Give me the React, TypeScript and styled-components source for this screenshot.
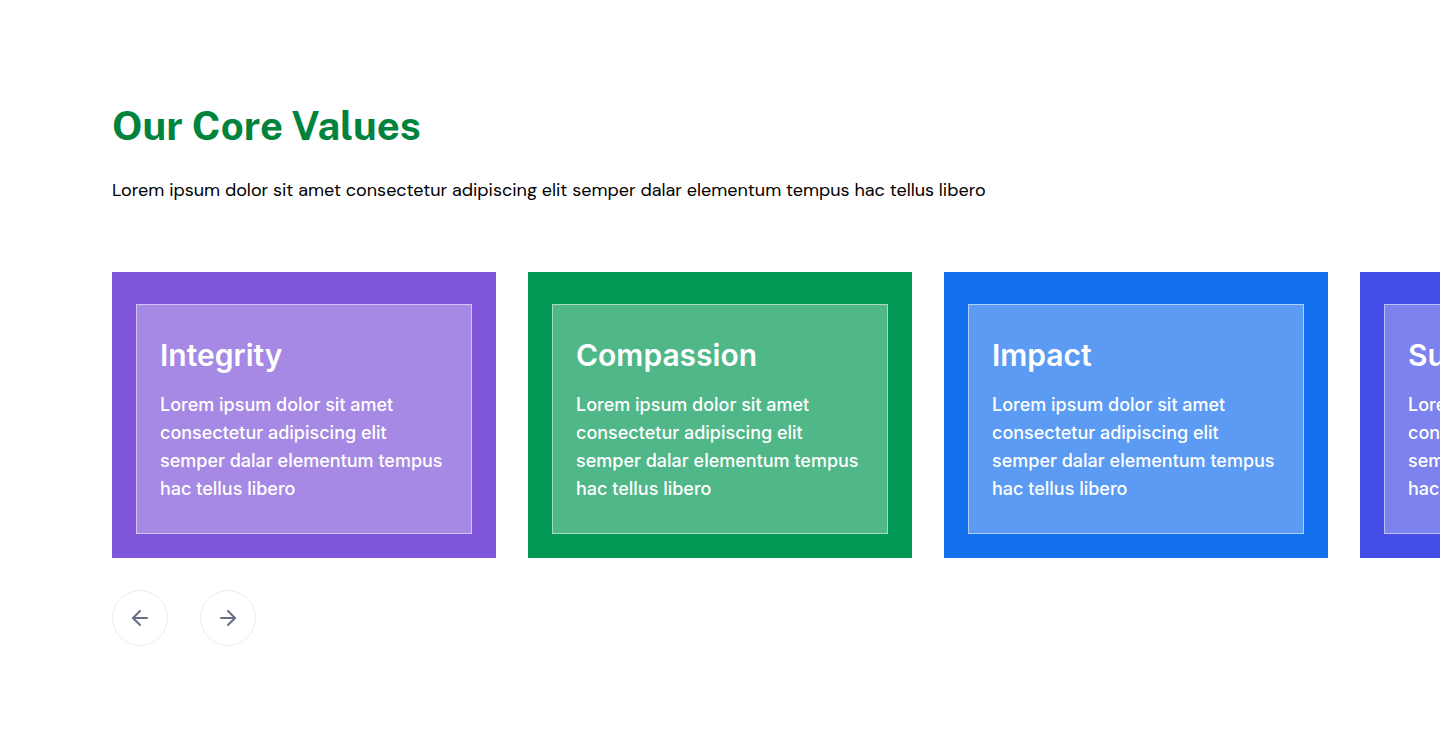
import { useRef } from "react";
import styled, { createGlobalStyle } from "styled-components";
import { ArrowLeft, ArrowRight } from "lucide-react";

const GlobalStyle = createGlobalStyle`
  *, *::before, *::after { box-sizing: border-box; }
  body {
    margin: 0;
    background: #ffffff;
    font-family: Inter, "Liberation Sans", sans-serif;
    -webkit-font-smoothing: antialiased;
  }
  h2, h3, p, ul { margin: 0; padding: 0; }
`;

const Section = styled.section`
  display: flex;
  flex-direction: column;
  gap: 32px;
  padding: 96px 0 96px 112px;
`;

const Header = styled.header`
  display: flex;
  flex-direction: column;
  gap: 20px;
  padding: 0 112px 36px 0;
`;

const Heading = styled.h2`
  font-family: "Public Sans", Inter, sans-serif;
  font-size: 40px;
  line-height: 60px;
  font-weight: 700;
  color: #00843d;
`;

const Intro = styled.p`
  font-family: "DM Sans", Inter, sans-serif;
  font-size: 18px;
  line-height: 28px;
  color: #000000;
`;

const Track = styled.ul`
  display: flex;
  gap: 32px;
  overflow-x: auto;
  list-style: none;
  scrollbar-width: none;
`;

const Card = styled.li<{ $color: string }>`
  flex: 0 0 384px;
  padding: 32px 24px 24px;
  background: ${({ $color }) => $color};
`;

const Panel = styled.article`
  display: flex;
  flex-direction: column;
  gap: 17px;
  padding: 31px 23px 30px;
  border: 1px solid rgba(255, 255, 255, 0.5);
  background: rgba(255, 255, 255, 0.3);
  color: #ffffff;
`;

const CardTitle = styled.h3`
  font-size: 30px;
  line-height: 38px;
  font-weight: 600;
`;

const CardText = styled.p`
  font-size: 18px;
  line-height: 28px;
  font-weight: 500;
`;

const Controls = styled.div`
  display: flex;
  gap: 32px;
`;

const RoundButton = styled.button`
  display: flex;
  align-items: center;
  justify-content: center;
  width: 56px;
  height: 56px;
  padding: 0;
  border: 1px solid #eaecf0;
  border-radius: 50%;
  background: #ffffff;
  color: #667085;
  cursor: pointer;
`;

const copy = "Lorem ipsum dolor sit amet consectetur adipiscing elit semper dalar elementum tempus hac tellus libero";

const values = [
  { title: "Integrity", color: "#7f56d9" },
  { title: "Compassion", color: "#039855" },
  { title: "Impact", color: "#1570ef" },
  { title: "Sustainability", color: "#444ce7" },
];

export default function App() {
  const track = useRef<HTMLUListElement>(null);
  const move = (direction: number) =>
    track.current?.scrollBy({ left: direction * 416, behavior: "smooth" });

  return (
    <>
      <GlobalStyle />
      <Section aria-labelledby="values-heading">
        <Header>
          <Heading id="values-heading">Our Core Values</Heading>
          <Intro>{copy}</Intro>
        </Header>
        <Track ref={track}>
          {values.map(({ title, color }) => (
            <Card key={title} $color={color}>
              <Panel>
                <CardTitle>{title}</CardTitle>
                <CardText>{copy}</CardText>
              </Panel>
            </Card>
          ))}
        </Track>
        <Controls>
          <RoundButton type="button" aria-label="Previous value" onClick={() => move(-1)}>
            <ArrowLeft size={24} />
          </RoundButton>
          <RoundButton type="button" aria-label="Next value" onClick={() => move(1)}>
            <ArrowRight size={24} />
          </RoundButton>
        </Controls>
      </Section>
    </>
  );
}
